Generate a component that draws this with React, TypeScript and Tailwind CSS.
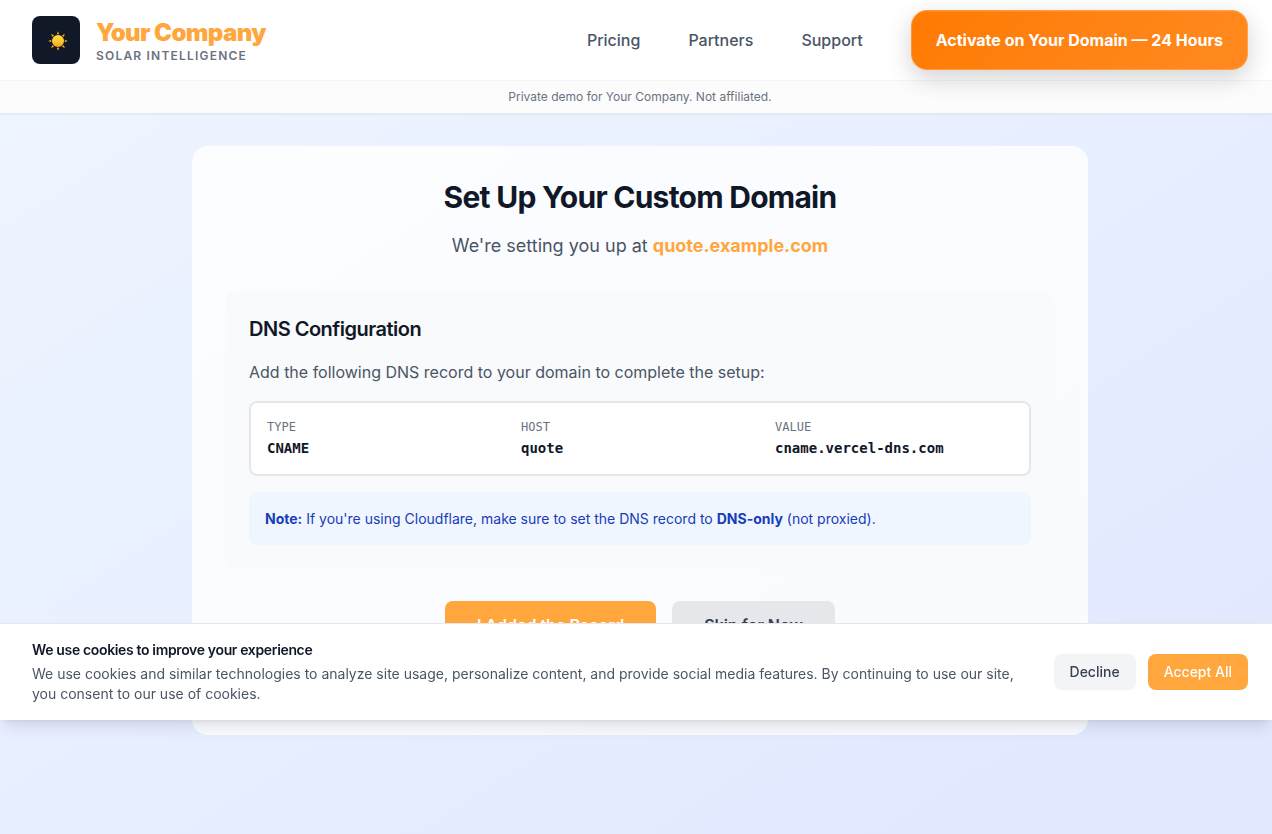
const rays = [0, 45, 90, 135, 180, 225, 270, 315];

function SunIcon() {
  return (
    <svg viewBox="0 0 20 20" className="mt-0.5 ml-1 size-5" aria-hidden="true">
      <defs>
        <linearGradient id="sun-disc" x1="0" y1="0" x2="0" y2="1">
          <stop offset="0" stopColor="#ffdf3a" />
          <stop offset="0.55" stopColor="#fec62e" />
          <stop offset="1" stopColor="#f99d1c" />
        </linearGradient>
      </defs>
      {rays.map((angle) => (
        <path key={angle} d="M8.8 3.2 L10 0.2 L11.2 3.2 Z" fill="#f5a623" transform={`rotate(${angle} 10 10)`} />
      ))}
      <circle cx="10" cy="10" r="6" fill="url(#sun-disc)" />
    </svg>
  );
}

function Header() {
  return (
    <header className="border-b border-[#e2e8f0] bg-white shadow-[0_1px_2px_rgba(0,0,0,0.04)]">
      <div className="flex h-20 items-center justify-between pr-6 pl-8">
        <a href="#home" className="flex items-center gap-4">
          <span className="flex size-12 items-center justify-center rounded-lg bg-[#111827]">
            <SunIcon />
          </span>
          <span className="flex flex-col pt-1">
            <span className="text-2xl leading-7 font-black tracking-tight text-[#ffa63d]">Your Company</span>
            <span className="text-xs leading-[18px] font-semibold tracking-widest text-gray-500 uppercase">
              Solar Intelligence
            </span>
          </span>
        </a>
        <div className="flex items-center gap-12">
          <nav className="flex items-center gap-12 font-medium text-gray-600">
            <a href="#pricing">Pricing</a>
            <a href="#partners">Partners</a>
            <a href="#support">Support</a>
          </nav>
          <button
            type="button"
            className="relative h-[60px] rounded-2xl border border-white/20 bg-linear-135 from-[#ff7a00] to-[#ff8a1f] bg-origin-border px-6 font-bold text-white shadow-[0_8px_24px_rgba(0,0,0,0.18),inset_0_1px_0_rgba(255,255,255,0.1)]"
          >
            Activate on Your Domain — 24 Hours
          </button>
        </div>
      </div>
      <p className="border-t border-gray-100 bg-[#fcfcfc] py-2 pr-6 pl-8 text-center text-xs text-gray-500">
        Private demo for Your Company. Not affiliated.
      </p>
    </header>
  );
}

function DnsRecord() {
  return (
    <div className="rounded-lg border-2 border-gray-200 bg-white p-4">
      <table className="w-full table-fixed text-left font-['DejaVu_Sans_Mono',monospace]">
        <thead className="text-xs text-gray-500">
          <tr>
            <th className="w-[254px] p-0 pb-1 font-normal">TYPE</th>
            <th className="w-[254px] p-0 pb-1 font-normal">HOST</th>
            <th className="p-0 pb-1 font-normal">VALUE</th>
          </tr>
        </thead>
        <tbody className="text-sm leading-[19px] font-bold text-gray-900">
          <tr>
            <td className="p-0">CNAME</td>
            <td className="p-0">quote</td>
            <td className="p-0">cname.vercel-dns.com</td>
          </tr>
        </tbody>
      </table>
    </div>
  );
}

function CookieBanner() {
  return (
    <section
      aria-label="Cookie consent"
      className="fixed inset-x-0 bottom-[114px] flex items-center gap-6 border-t border-gray-200 bg-white py-4 pr-6 pl-8 text-sm shadow-lg"
    >
      <div className="flex-1">
        <h3 className="mb-1 font-semibold tracking-tight text-gray-900">We use cookies to improve your experience</h3>
        <p className="text-gray-600">
          We use cookies and similar technologies to analyze site usage, personalize content, and provide social media
          features. By continuing to use our site, you consent to our use of cookies.
        </p>
      </div>
      <div className="flex gap-3 font-medium">
        <button type="button" className="rounded-lg bg-gray-100 px-4 py-2 text-gray-700">
          Decline
        </button>
        <button type="button" className="rounded-lg bg-[#ffa63d] px-4 py-2 text-white">
          Accept All
        </button>
      </div>
    </section>
  );
}

export default function App() {
  return (
    <div className="min-h-screen bg-linear-to-br from-[#eff6ff] to-[#e0e7ff] font-[Inter,sans-serif] text-gray-900">
      <Header />
      <main className="py-8 pr-6 pl-8">
        <div className="mx-auto max-w-4xl rounded-2xl border border-white/30 bg-white/80 px-8 pt-8 pb-[85px]">
          <h1 className="mb-4 text-center text-3xl font-bold tracking-tight">Set Up Your Custom Domain</h1>
          <p className="mb-[30px] text-center text-lg leading-[30px] text-gray-600">
            We're setting you up at <strong className="font-bold text-[#ffa63d]">quote.example.com</strong>
          </p>
          <section className="mb-8 rounded-xl bg-gray-50 p-6">
            <h2 className="mb-4 text-xl font-semibold tracking-tight">DNS Configuration</h2>
            <p className="mb-4 leading-[26px] text-gray-600">
              Add the following DNS record to your domain to complete the setup:
            </p>
            <DnsRecord />
            <p className="mt-4 rounded-lg bg-blue-50 p-4 text-sm leading-[21px] text-blue-800">
              <strong className="font-bold">Note:</strong> If you're using Cloudflare, make sure to set the DNS record
              to <strong className="font-bold">DNS-only</strong> (not proxied).
            </p>
          </section>
          <div className="flex justify-center gap-4 font-semibold">
            <button type="button" className="rounded-lg bg-[#ffa63d] px-8 py-3 text-white">
              I Added the Record
            </button>
            <button type="button" className="rounded-lg bg-gray-200 px-8 py-3 text-gray-700">
              Skip for Now
            </button>
          </div>
        </div>
      </main>
      <CookieBanner />
    </div>
  );
}
